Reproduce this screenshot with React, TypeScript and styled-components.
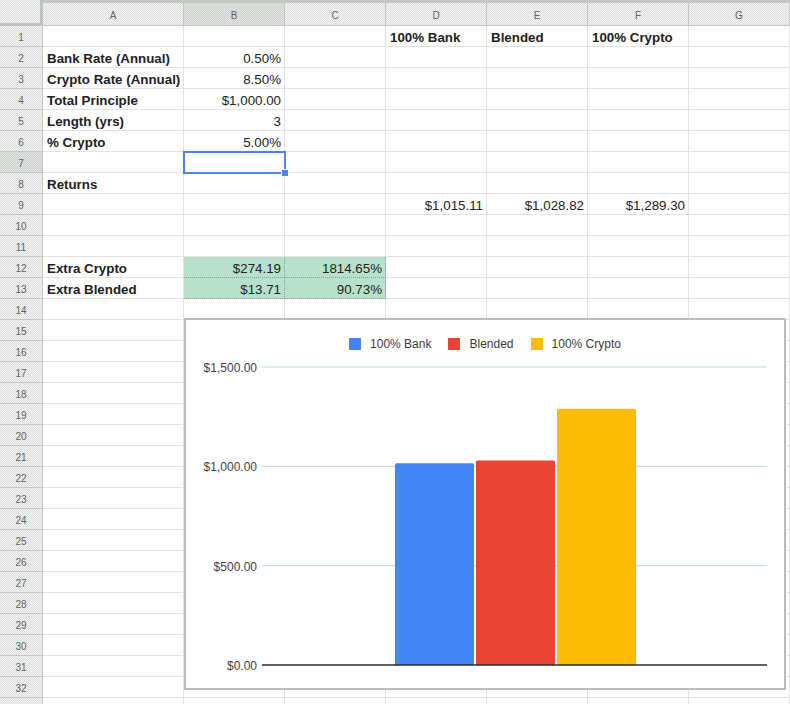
import React from "react";
import styled, { createGlobalStyle, css } from "styled-components";

const GlobalStyle = createGlobalStyle`
  html, body {
    margin: 0;
    padding: 0;
    background: #fff;
    overflow: hidden;
  }
  body {
    font-family: "Liberation Sans", Arial, sans-serif;
  }
`;

const HEAD_LINE = "#c4c7c4";
const GRID_LINE = "#e2e3e3";

const dotted = (base: string, dot: string) => css`
  background-color: ${base};
  background-image: repeating-conic-gradient(${dot} 0 25%, transparent 0 50%);
  background-size: 2px 2px;
`;

const Sheet = styled.div`
  position: relative;
  width: 790px;
  height: 704px;
  overflow: hidden;
`;

const Grid = styled.div`
  display: grid;
  grid-template-columns: 43px 141px repeat(6, 101px);
  grid-template-rows: 26px;
  grid-auto-rows: 21px;
`;

const Corner = styled.div`
  box-sizing: border-box;
  ${dotted("#f3f4f3", "#dcdedc")}
  border-right: 3px solid #bfc3bf;
  border-bottom: 3px solid #bfc3bf;
`;

const ColHead = styled.div<{ $active?: boolean }>`
  box-sizing: border-box;
  display: flex;
  align-items: center;
  justify-content: center;
  ${p => (p.$active ? dotted("#e1e3e1", "#cfd1cf") : dotted("#f3f4f3", "#dcdedc"))}
  border-right: 1px solid ${HEAD_LINE};
  border-bottom: 1px solid ${HEAD_LINE};
  box-shadow: inset 0 2px 0 transparent, inset 0 3px 0 ${HEAD_LINE};
  padding-top: 5px;
  font-size: 10px;
  color: #5f6368;
`;

const RowHead = styled.div<{ $active?: boolean }>`
  box-sizing: border-box;
  display: flex;
  align-items: center;
  justify-content: center;
  ${p => (p.$active ? dotted("#e1e3e1", "#cfd1cf") : dotted("#f3f4f3", "#dcdedc"))}
  border-right: 1px solid ${HEAD_LINE};
  border-bottom: 1px solid ${HEAD_LINE};
  padding-top: 3px;
  font-size: 10px;
  color: #5f6368;
`;

const Cell = styled.div<{ $right?: boolean; $bold?: boolean; $fill?: boolean; $selected?: boolean }>`
  position: relative;
  box-sizing: border-box;
  padding: 3px 3px 0 4px;
  border-right: 1px solid ${GRID_LINE};
  border-bottom: 1px solid ${GRID_LINE};
  font-size: 13.33px;
  line-height: 18px;
  white-space: nowrap;
  color: #222;
  text-align: ${p => (p.$right ? "right" : "left")};
  font-weight: ${p => (p.$bold ? 700 : 400)};

  ${p =>
    p.$fill &&
    css`
      background: #b7e1cd;
      border-right: 1px dotted #8e9c96;
      border-bottom: 1px dotted #8e9c96;
    `}

  ${p =>
    p.$selected &&
    css`
      &::before {
        content: "";
        position: absolute;
        left: -1px;
        top: -1px;
        right: -2px;
        bottom: -2px;
        border: 2px solid #4a86e8;
        z-index: 2;
      }
      &::after {
        content: "";
        position: absolute;
        right: -5px;
        bottom: -5px;
        width: 6px;
        height: 6px;
        background: #4a86e8;
        border: 1px solid #fff;
        z-index: 3;
      }
    `}
`;

const ChartFrame = styled.div`
  position: absolute;
  left: 184px;
  top: 318px;
  width: 602px;
  height: 372px;
  box-sizing: border-box;
  border: 2px solid #bdbdb8;
  background: #fff;
  z-index: 5;
  display: flex;
  flex-direction: column;
`;

const Legend = styled.div`
  display: flex;
  justify-content: center;
  gap: 17px;
  padding-top: 18px;
  height: 30px;
  box-sizing: border-box;
`;

const LegendItem = styled.div`
  display: flex;
  align-items: center;
  gap: 9px;
  height: 12px;
  font-size: 12px;
  color: #3c3c3c;
`;

const Swatch = styled.span<{ $color: string }>`
  width: 12px;
  height: 12px;
  background: ${p => p.$color};
`;

const Plot = styled.svg`
  display: block;
  font-family: "Liberation Sans", Arial, sans-serif;
`;

type CellSpec = { text?: string; bold?: boolean; right?: boolean; fill?: boolean; selected?: boolean };

const label = (text: string): CellSpec => ({ text, bold: true });
const num = (text: string, fill = false): CellSpec => ({ text, right: true, fill });

const data: Record<number, CellSpec[]> = {
  1: [{}, {}, {}, label("100% Bank"), label("Blended"), label("100% Crypto")],
  2: [label("Bank Rate (Annual)"), num("0.50%")],
  3: [label("Crypto Rate (Annual)"), num("8.50%")],
  4: [label("Total Principle"), num("$1,000.00")],
  5: [label("Length (yrs)"), num("3")],
  6: [label("% Crypto"), num("5.00%")],
  7: [{}, { selected: true }],
  8: [label("Returns")],
  9: [{}, {}, {}, num("$1,015.11"), num("$1,028.82"), num("$1,289.30")],
  12: [label("Extra Crypto"), num("$274.19", true), num("1814.65%", true)],
  13: [label("Extra Blended"), num("$13.71", true), num("90.73%", true)],
};

const columns = ["A", "B", "C", "D", "E", "F", "G"];
// row 33 only peeks in at the bottom edge, its number is below the fold
const ROWS = 33;
const LABELLED_ROWS = 32;

const series = [
  { name: "100% Bank", value: 1015.11, color: "#4285f4", x: 209 },
  { name: "Blended", value: 1028.82, color: "#ea4335", x: 290 },
  { name: "100% Crypto", value: 1289.3, color: "#fbbc04", x: 371 },
];

const ZERO = 315;
const SCALE = 298 / 1500;
const BAR_W = 79;
const ticks = [1500, 1000, 500, 0];

const money = (v: number) =>
  "$" + v.toLocaleString("en-US", { minimumFractionDigits: 2, maximumFractionDigits: 2 });

const barPath = (x: number, value: number) => {
  const top = ZERO - value * SCALE;
  const r = 1.5;
  return `M${x} ${ZERO} V${top + r} Q${x} ${top} ${x + r} ${top} H${x + BAR_W - r} Q${x + BAR_W} ${top} ${
    x + BAR_W
  } ${top + r} V${ZERO} Z`;
};

const Chart = () => (
  <ChartFrame>
    <Legend>
      {series.map(s => (
        <LegendItem key={s.name}>
          <Swatch $color={s.color} />
          {s.name}
        </LegendItem>
      ))}
    </Legend>
    <Plot width={598} height={338}>
      {ticks.map(t => {
        const y = ZERO - t * SCALE;
        return (
          <g key={t}>
            {t > 0 && <line x1={76} x2={581} y1={y} y2={y} stroke="#b7dcd1" strokeWidth={1} />}
            <text x={71} y={y + 5} textAnchor="end" fontSize={12} fill="#444">
              {money(t)}
            </text>
          </g>
        );
      })}
      {series.map(s => (
        <path key={s.name} d={barPath(s.x, s.value)} fill={s.color} />
      ))}
      <line x1={76} x2={581} y1={ZERO} y2={ZERO} stroke="#2b2b2b" strokeWidth={1.3} />
    </Plot>
  </ChartFrame>
);

const App = () => {
  const rows = Array.from({ length: ROWS }, (_, i) => i + 1);
  return (
    <>
      <GlobalStyle />
      <Sheet>
        <Grid>
          <Corner />
          {columns.map(c => (
            <ColHead key={c} $active={c === "B"}>
              {c}
            </ColHead>
          ))}
          {rows.map(r => {
            const specs = data[r] || [];
            return (
              <React.Fragment key={r}>
                <RowHead $active={r === 7}>{r <= LABELLED_ROWS ? r : null}</RowHead>
                {columns.map((c, i) => {
                  const s = specs[i] || {};
                  return (
                    <Cell
                      key={c}
                      $right={s.right}
                      $bold={s.bold}
                      $fill={s.fill}
                      $selected={s.selected}
                    >
                      {s.text}
                    </Cell>
                  );
                })}
              </React.Fragment>
            );
          })}
        </Grid>
        <Chart />
      </Sheet>
    </>
  );
};

export default App;
